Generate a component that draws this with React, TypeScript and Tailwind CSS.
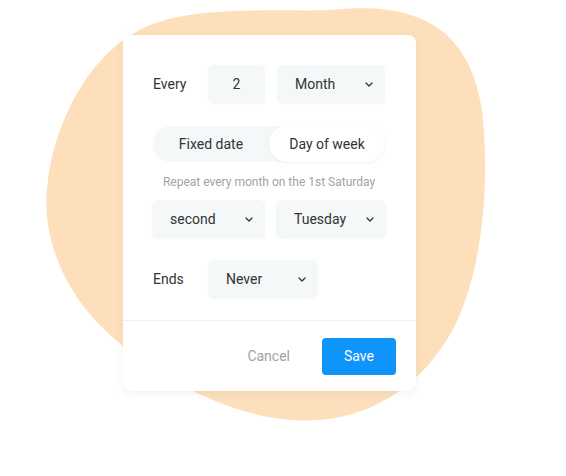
import React from "react";

function Chevron() {
  return (
    <svg width="8" height="5" viewBox="0 0 8 5" fill="none" className="shrink-0">
      <path d="M1 1l3 3 3-3" stroke="#333" strokeWidth="1.3" strokeLinecap="round" strokeLinejoin="round" />
    </svg>
  );
}

function Select({ label, w }: { label: string; w: string }) {
  return (
    <div className={`${w} h-[38px] rounded-[6px] bg-[#f4f8f9] shadow-[0_1px_2px_rgba(0,0,0,0.04)] flex items-center justify-between pl-[18px] pr-[12px] text-[14px] text-[#333]`}>
      <span>{label}</span>
      <Chevron />
    </div>
  );
}

export default function App() {
  return (
    <div className="relative w-[566px] h-[476px] bg-white overflow-hidden" style={{ fontFamily: "Roboto, 'Noto Sans', sans-serif" }}>
      <svg className="absolute inset-0" width="566" height="476" viewBox="0 0 566 476">
        <path
          d="M330 10 C420 0 470 30 482 110 C492 200 478 300 440 350 C405 400 350 425 290 420 C230 415 160 380 110 335 C60 290 40 230 48 180 C56 120 90 50 150 25 C200 5 280 12 330 10 Z"
          fill="#fde0bb"
        />
      </svg>
      <div className="relative pt-[35px] pl-[123px]">
        <div className="w-[293px] bg-white rounded-[8px] shadow-[0_2px_10px_rgba(0,0,0,0.06)]">
          <div className="pl-[30px] pr-[30px] pt-[30px] pb-[22px] flex flex-col">
            <div className="flex items-center">
              <div className="w-[55px] text-[14px] text-[#333]">Every</div>
              <div className="w-[57px] h-[38px] rounded-[6px] bg-[#f4f8f9] shadow-[0_1px_2px_rgba(0,0,0,0.04)] flex items-center justify-center text-[14px] text-[#333]">2</div>
              <div className="ml-[12px]">
                <Select label="Month" w="w-[108px]" />
              </div>
            </div>
            <div className="mt-[23px] w-[232px] h-[36px] rounded-full bg-[#f4f8f9] flex text-[14px] text-[#333]">
              <div className="w-[116px] flex items-center justify-center">Fixed date</div>
              <div className="w-[116px] flex items-center justify-center rounded-full bg-white shadow-[0_1px_3px_rgba(0,0,0,0.06)]">Day of week</div>
            </div>
            <div className="w-[232px] mt-[12px] text-center text-[12px] leading-[16px] text-[#a0a4a8]">
              Repeat every month on the 1st Saturday
            </div>
            <div className="mt-[10px] flex gap-[11px] -ml-[1px]">
              <Select label="second" w="w-[113px]" />
              <Select label="Tuesday" w="w-[110px]" />
            </div>
            <div className="mt-[22px] flex items-center">
              <div className="w-[55px] text-[14px] text-[#333]">Ends</div>
              <Select label="Never" w="w-[110px]" />
            </div>
          </div>
          <div className="border-t border-[#eef0f2] flex items-center justify-end pt-[17px] pb-[16px] pr-[20px] gap-[32px]">
            <span className="text-[14px] text-[#9ea3a8]">Cancel</span>
            <div className="w-[74px] h-[37px] rounded-[4px] bg-[#0f94fc] flex items-center justify-center text-[14px] text-white">Save</div>
          </div>
        </div>
      </div>
    </div>
  );
}
